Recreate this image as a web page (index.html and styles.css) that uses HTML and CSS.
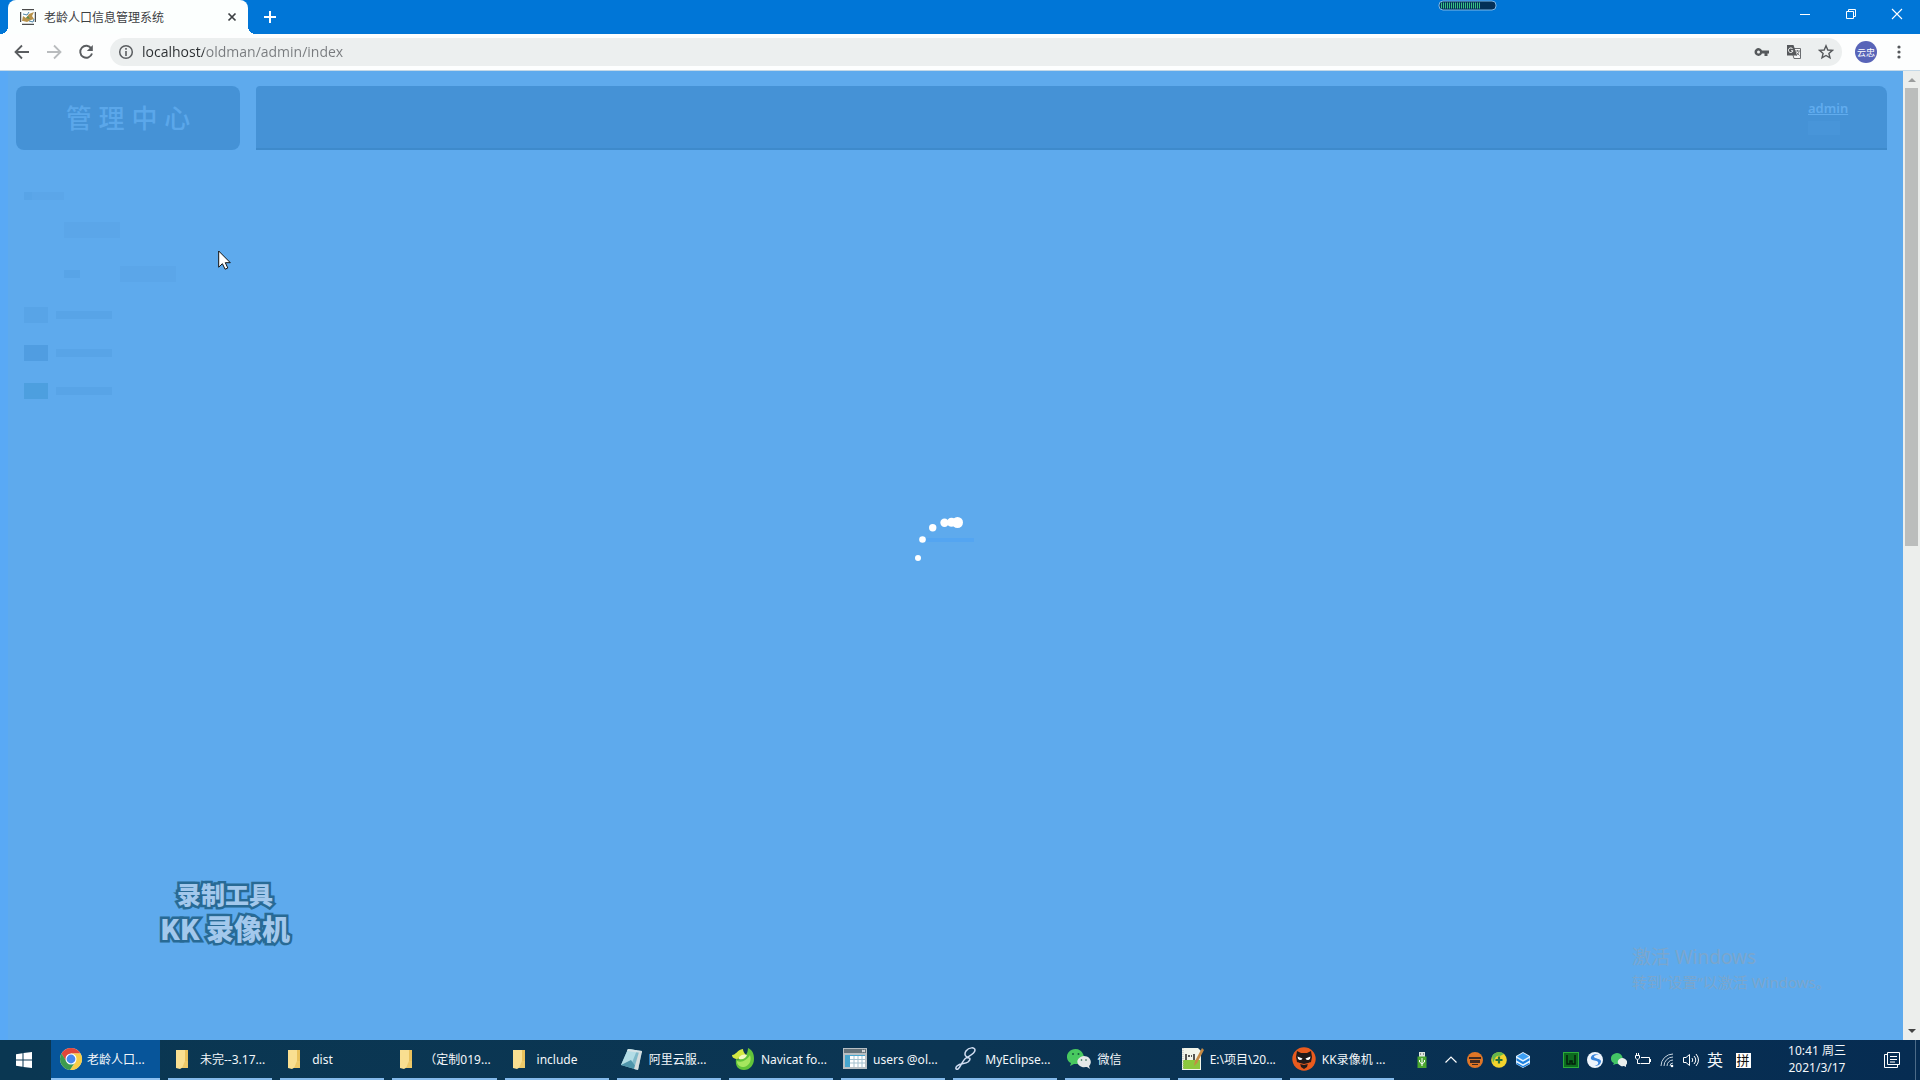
FILE: index.html
```html
<!DOCTYPE html>
<html lang="zh-CN">
<head>
<meta charset="utf-8">
<title>老龄人口信息管理系统</title>
<link rel="stylesheet" href="styles.css">
</head>
<body>
<div class="screen">
  <header class="tabstrip">
    <div class="tab">
      <svg class="favicon" viewBox="0 0 16 16" width="16" height="16"><path d="M2 .7h12M2 15.3h12M.7 3v10M15.3 3v10" stroke="#222" fill="none"/><path d="M2 12l1-5 3 2 3-4 5-2-2 4 2 3-3 1-4 2-4-1z" fill="#b8924a"/><path d="M3 5l4 1 2-3M9 12l4 1 1-3" stroke="#4f86a8" fill="none"/><path d="M6 9l4 1-2-3z" fill="#5e8b4a"/></svg>
      <span class="tab-title">老龄人口信息管理系统</span>
      <button class="plain tab-close" aria-label="关闭标签页"><svg viewBox="0 0 16 16" width="16" height="16"><path d="M4.500 4.500l7 7M11.500 4.500l-7 7" stroke="#3c4043" stroke-width="1.700"/></svg></button>
    </div>
    <button class="plain new-tab" aria-label="新标签页"><svg viewBox="0 0 16 16" width="16" height="16"><path d="M8 2v12M2 8h12" stroke="#fff" stroke-width="2"/></svg></button>
    <div class="window-buttons">
      <button class="plain" aria-label="最小化"><svg viewBox="0 0 12 12" width="12" height="12"><path d="M1 6.500h10" stroke="#fff"/></svg></button>
      <button class="plain" aria-label="还原"><svg viewBox="0 0 12 12" width="12" height="12"><path d="M1.500 3.500h7v7h-7zM3.500 3.500v-2h7v7h-2" fill="none" stroke="#fff"/></svg></button>
      <button class="plain" aria-label="关闭"><svg viewBox="0 0 12 12" width="12" height="12"><path d="M1 1l10 10M11 1L1 11" stroke="#fff" stroke-width="1.100"/></svg></button>
    </div>
    <svg class="meter" viewBox="0 0 60 12" width="60" height="12"><rect x="1" y="1" width="57" height="9" rx="4" fill="#043057" stroke="#7db7e8"/><path d="M3 5.500h39" stroke="#38c383" stroke-width="6" stroke-dasharray="1 1"/></svg>
  </header>

  <nav class="toolbar">
    <div class="nav-buttons">
      <button class="plain" aria-label="后退"><svg viewBox="0 0 16 16" width="16" height="16"><path d="M15 8H2M8 1.500L1.500 8 8 14.500" fill="none" stroke="#5a5d60" stroke-width="1.800"/></svg></button>
      <button class="plain" aria-label="前进"><svg viewBox="0 0 16 16" width="16" height="16"><path d="M1 8h13M8 1.500L14.500 8 8 14.500" fill="none" stroke="#b9bcbe" stroke-width="1.800"/></svg></button>
      <button class="plain" aria-label="重新加载"><svg viewBox="0 0 16 16" width="16" height="16"><path d="M13.300 4.500A6 6 0 1 0 14 9.500" fill="none" stroke="#5a5d60" stroke-width="1.900"/><path d="M14.800 1v6h-6z" fill="#5a5d60"/></svg></button>
    </div>
    <div class="omnibox">
      <svg viewBox="0 0 16 16" width="16" height="16"><circle cx="8" cy="8" r="6.300" fill="none" stroke="#5a5d60" stroke-width="1.500"/><path d="M8 7v5M8 4v1.700" stroke="#5a5d60" stroke-width="1.600"/></svg>
      <input class="url" type="text" aria-label="地址" value="localhost/oldman/admin/index">
      <button class="plain" aria-label="密码"><svg viewBox="0 0 16 16" width="16" height="16"><path d="M8 6.500h7v3h-1.500V12h-3V9.500H8A3.900 3.900 0 1 1 8 6.500z" fill="#55585b"/><circle cx="4.500" cy="8" r="1.500" fill="#ecefef"/></svg></button>
      <button class="plain" aria-label="翻译"><svg viewBox="0 0 16 16" width="16" height="16"><path d="M5 4.500h9.500v10H8z" fill="#f5f6f6" stroke="#6a6d70"/><path d="M1 1h6.500l3.500 10.500H1z" fill="#55585b"/><path d="M6.700 5A2.300 2.300 0 1 0 7 6.800H5" fill="none" stroke="#fff"/><path d="M9 7h5M11.500 6v1.500M13 7.500c-.5 2-1.500 3-3 4M10.500 8.500l3 3" fill="none" stroke="#6a6d70" stroke-width=".9"/></svg></button>
      <button class="plain" aria-label="收藏"><svg viewBox="0 0 16 16" width="16" height="16"><path d="M8 1.800l1.800 4.200 4.600.4-3.500 3 1.100 4.500L8 11.500l-4 2.400 1.100-4.500-3.500-3 4.600-.4z" fill="none" stroke="#55585b" stroke-width="1.400"/></svg></button>
    </div>
    <button class="plain avatar">云忠</button>
    <button class="plain menu" aria-label="菜单"><svg viewBox="0 0 16 16" width="16" height="16"><g fill="#55585b"><circle cx="8" cy="3" r="1.600"/><circle cx="8" cy="8" r="1.600"/><circle cx="8" cy="13" r="1.600"/></g></svg></button>
  </nav>

  <div class="viewport">
    <main class="page">
      <aside class="sidebar">
        <h1 class="brand">管 理 中 心</h1>
        <div class="side-menu">
          <div class="row"><i class="mark"></i><i class="mark medium faint"></i></div>
          <div class="row sub"><i class="mark wide tall faint"></i></div>
          <div class="row sub"><i class="mark small"></i><i class="mark wide tall faint far"></i></div>
          <div class="row item"><i class="mark icon"></i><i class="mark wide"></i></div>
          <div class="row item"><i class="mark icon dark"></i><i class="mark wide"></i></div>
          <div class="row item"><i class="mark icon teal"></i><i class="mark wide"></i></div>
        </div>
      </aside>
      <div class="topbar">
        <div class="user"><a href="#">admin</a><i class="user-note"></i></div>
      </div>
      <div class="loader" role="status" aria-label="加载中">
        <svg viewBox="0 0 80 80" width="80" height="80"><path d="M14 24h48" stroke="#54a5f1" stroke-width="4"/><g fill="#fff"><circle cx="6" cy="42" r="3"/><circle cx="10.500" cy="23.500" r="3.300"/><circle cx="20.700" cy="11.700" r="3.700"/><circle cx="32.500" cy="6.700" r="4.200"/><circle cx="39.500" cy="6.200" r="4.500"/><circle cx="45.500" cy="6.500" r="5.500"/></g></svg>
      </div>
      <div class="recorder"><span>录制工具</span><span class="recorder-name">KK 录像机</span></div>
      <div class="activate"><span class="activate-title">激活 Windows</span><span>转到“设置”以激活 Windows。</span></div>
      <svg class="cursor" viewBox="0 0 13 20" width="13" height="20"><path d="M.7 1v16.200l3.700-3.500 2.700 5.500 2.700-1.200-2.500-5.300h5z" fill="#fff" stroke="#111"/></svg>
    </main>
    <div class="scrollbar">
      <svg viewBox="0 0 17 17" width="17" height="17"><path d="M5 11l4-4 4 4z" fill="#9b9d9d"/></svg>
      <div class="track"><div class="thumb"></div></div>
      <svg viewBox="0 0 17 17" width="17" height="17"><path d="M5 6l4 4 4-4z" fill="#444"/></svg>
    </div>
  </div>

  <footer class="taskbar">
    <button class="plain start" aria-label="开始"><svg viewBox="0 0 16 16" width="16" height="16"><path d="M0 2.300l6.500-1v6.200H0zM7.500 1.100L16 0v7.500H7.500zM0 8.500h6.500v6.300L0 13.800zM7.500 8.500H16V16l-8.500-1.100z" fill="#fff"/></svg></button>
    <div class="tasks">
      <button class="plain task active"><svg viewBox="0 0 24 24" width="24" height="24"><circle cx="12" cy="12" r="11" fill="#e8e8e8"/><path d="M2.500 6.500A11 11 0 0 1 21.500 6.500H12L7.200 14.700z" fill="#e0463a"/><path d="M21.500 6.500A11 11 0 0 1 11 23L16.800 14.700 16.500 9 12 6.500z" fill="#f7cd46"/><path d="M2.500 6.500A11 11 0 0 0 11 23L16.500 14.500H7.500z" fill="#3d9b4f"/><circle cx="12" cy="12" r="5.500" fill="#fff"/><circle cx="12" cy="12" r="4.400" fill="#4787ed"/></svg><span>老龄人口...</span></button>
      <button class="plain task"><svg viewBox="0 0 24 24" width="24" height="24"><path d="M6 3h12v18H6z" fill="#e9c15c"/><path d="M6 3h9v16l-5 3-4-1z" fill="#f9df91"/><path d="M15 14h3v7h-6z" fill="#edc969"/></svg><span>未完--3.17...</span></button>
      <button class="plain task"><svg viewBox="0 0 24 24" width="24" height="24"><path d="M6 3h12v18H6z" fill="#e9c15c"/><path d="M6 3h9v16l-5 3-4-1z" fill="#f9df91"/><path d="M15 14h3v7h-6z" fill="#edc969"/></svg><span>dist</span></button>
      <button class="plain task"><svg viewBox="0 0 24 24" width="24" height="24"><path d="M6 3h12v18H6z" fill="#e9c15c"/><path d="M6 3h9v16l-5 3-4-1z" fill="#f9df91"/><path d="M15 14h3v7h-6z" fill="#edc969"/></svg><span>（定制019...</span></button>
      <button class="plain task"><svg viewBox="0 0 24 24" width="24" height="24"><path d="M6 3h12v18H6z" fill="#e9c15c"/><path d="M6 3h9v16l-5 3-4-1z" fill="#f9df91"/><path d="M15 14h3v7h-6z" fill="#edc969"/></svg><span>include</span></button>
      <button class="plain task"><svg viewBox="0 0 24 24" width="24" height="24"><path d="M9 2l14 2-4 19L2 18z" fill="#7fb9c9"/><path d="M9 2l9 1.300L12 18 2 18z" fill="#b3dde6"/><path d="M2 18l10-5 7 10z" fill="#4f95ab"/><path d="M9 2l14 2-.5 2L8 4z" fill="#d6e3e6"/><path d="M20 5l3-1-4 19-4-1z" fill="#d5dcdd"/></svg><span>阿里云服...</span></button>
      <button class="plain task"><svg viewBox="0 0 24 24" width="24" height="24"><path d="M5 12c4 1 8-1 10-4 1-2 2-4 2-7 4 2 6 5 6 11s-4 11-10 11S4 19 5 12z" fill="#62c43a"/><path d="M1 8c4 0 5-5 11-6 0 2 1 4 3 6-3 3-6 4-10 4-3-1-4-2-4-4z" fill="#d3e943"/><path d="M6 14c5 2 10-1 13-6 2 6-1 11-6 12-4 0-7-2-7-6z" fill="#a6e65f"/><path d="M8 10c3-3 6-3 8-2-1 3-4 5-8 4z" fill="#f1f9c0"/></svg><span>Navicat fo...</span></button>
      <button class="plain task"><svg viewBox="0 0 24 24" width="24" height="24"><path d="M0 1h24v21H0z" fill="#b8bfc3"/><path d="M1 2h22v4H1z" fill="#65737b"/><path d="M2 8h20v12H2z" fill="#46a6cf"/><path d="M7 9h15v11H7z" fill="#fff"/><path d="M7 12.500h15M7 16h15M11 9v11M15 9v11M19 9v11" stroke="#a4c1cf"/><path d="M19 3l3 2M22 3l-3 2" stroke="#eee"/></svg><span>users @ol...</span></button>
      <button class="plain task"><svg viewBox="0 0 24 24" width="24" height="24"><path d="M14 11c-4-1-5-4-3-7 3-4 9-4 9-1 0 4-6 6-9 8-4 3-6 10-8 11-2 1-3-1-1-3 3-3 8-2 11-4 3-3 2-4 1-4z" fill="none" stroke="#d2def2" stroke-width="1.500"/></svg><span>MyEclipse...</span></button>
      <button class="plain task"><svg viewBox="0 0 24 24" width="24" height="24"><path d="M8.500 2C-2 3-2 14 4 16l-1 3 4-2c8 1 12-5 9-10C15 4 12 2 8.500 2z" fill="#48c95f"/><path d="M17 9c-8 1-9 9-2 11 2 .5 4 0 5 0l3 2-1-3c4-4 1-10-5-10z" fill="#e5e8e7"/><g fill="#175c3d"><circle cx="6" cy="7" r="1"/><circle cx="11.500" cy="7" r="1"/><circle cx="14.500" cy="13" r=".8"/><circle cx="19" cy="13" r=".8"/></g></svg><span>微信</span></button>
      <button class="plain task"><svg viewBox="0 0 24 24" width="24" height="24"><path d="M2 1h16l3 3v19H2z" fill="#f0f4e9"/><path d="M3 13h17v9H3z" fill="#8bc83e"/><path d="M6 7v6M8 9h2M11 9h1M14 7v6" stroke="#222" stroke-width="1.500"/><path d="M22 1l2 2-7 13-3 3 1-5z" fill="#c48a45"/><path d="M3 1v22" stroke="#bbb" stroke-dasharray="1 1"/></svg><span>E:\项目\20...</span></button>
      <button class="plain task"><svg viewBox="0 0 24 24" width="24" height="24"><circle cx="12" cy="12" r="11.700" fill="#e95b1e"/><path d="M5 4l4 2h6l4-2 1 6-1 5q-7 4-14 0l-1-5z" fill="#211a1a"/><path d="M8 16h8l-1 4-3 2-3-2z" fill="#211a1a"/><path d="M5.500 9.500l5 2q-1 2-3 1.500-2-1-2-3.500zM18.500 9.500l-5 2q1 2 3 1.500 2-1 2-3.500z" fill="#fff"/><path d="M6 16q6 3 12 0" fill="none" stroke="#e95b1e"/></svg><span>KK录像机 ...</span></button>
    </div>
    <div class="tray">
      <button class="plain usb" aria-label="安全删除硬件"><svg viewBox="0 0 16 16" width="16" height="16"><path d="M5 0h6v5H5z" fill="#dfe5df"/><path d="M6.500 1.500v1M9.500 1.500v1" stroke="#444"/><path d="M3.500 4.500h9V16h-9z" fill="#4aa62f"/><path d="M8 6v8M5.500 8v2l2.500 2 2.500-2V8" fill="none" stroke="#fff"/></svg></button>
      <button class="plain" aria-label="显示隐藏的图标"><svg viewBox="0 0 16 16" width="16" height="16"><path d="M2.500 10.500L8 5l5.500 5.500" fill="none" stroke="#fff" stroke-width="1.200"/></svg></button>
      <button class="plain" aria-label="KK录像机"><svg viewBox="0 0 16 16" width="16" height="16"><circle cx="8" cy="8" r="8" fill="#df7627"/><path d="M2 5h12v2H2zM3 8h10v3H3zM5 12h6v1H5z" fill="#3e2a22"/></svg></button>
      <button class="plain" aria-label="安全卫士"><svg viewBox="0 0 16 16" width="16" height="16"><circle cx="8" cy="8" r="7.800" fill="#f3d42d"/><path d="M1 4a8 8 0 0 1 12-2L9 4C4 3 4 8 2 11z" fill="#66b84c"/><path d="M8 4.500v7M4.500 8h7" stroke="#27723a" stroke-width="2.200"/></svg></button>
      <button class="plain" aria-label="云盘"><svg viewBox="0 0 16 16" width="16" height="16"><path d="M8 0l7 4v8l-7 4-7-4V4z" fill="#e5f3ff"/><path d="M8 1l6 3.500L8 8 2 4.500z" fill="#3da0f5"/><path d="M1.500 6L8 9.800 14.500 6v2.500L8 12.300 1.500 8.500z" fill="#1b80df"/><path d="M1.500 10.500L8 14l6.500-3.500V12L8 15.500 1.500 12z" fill="#1b80df"/></svg></button>
      <button class="plain guard" aria-label="守护"><svg viewBox="0 0 16 16" width="16" height="16"><rect x=".5" y=".5" width="15" height="15" fill="#0d6b20" stroke="#2bad39"/><path d="M4 3v9h3V9h2v3h3V3" fill="none" stroke="#031e0b" stroke-width="1.500"/></svg></button>
      <button class="plain" aria-label="浏览器"><svg viewBox="0 0 16 16" width="16" height="16"><circle cx="8" cy="8" r="8" fill="#edf4fc"/><path d="M12 3C7 1 3 4 4 7c1 2 6 1 7 3s-1 4-4 3c4 2 7-1 7-4-1-3-6-2-7-4 0-2 3-2 5-2z" fill="#3985dc"/></svg></button>
      <button class="plain" aria-label="微信"><svg viewBox="0 0 16 16" width="16" height="16"><path d="M6 1C-2 2-1 10 3 11l-1 2 3-1c6 0 8-4 6-8C10 2 8 1 6 1z" fill="#43c665"/><path d="M11 6c-5 1-6 6-1 8 1 .4 3 0 3 0l2 1v-2c3-3 0-7-4-7z" fill="#e9eeec"/></svg></button>
      <button class="plain" aria-label="电池"><svg viewBox="0 0 16 16" width="16" height="16"><path d="M6 5.500h8.500v6h-9M15.500 7v3M.5 3.500h4v2.500l-2 2-2-2zM1.500 3.500V1M3.500 3.500V1M2.500 8v3.500H5" fill="none" stroke="#fff"/></svg></button>
      <button class="plain" aria-label="网络"><svg viewBox="0 0 16 16" width="16" height="16"><path d="M2 14A12 12 0 0 1 14 2M5 14a9 9 0 0 1 9-9M8 14a6 6 0 0 1 6-6M11 14a3 3 0 0 1 3-3" fill="none" stroke="#c7d4df"/><circle cx="13" cy="14" r="1.300" fill="#fff"/></svg></button>
      <button class="plain" aria-label="音量"><svg viewBox="0 0 16 16" width="16" height="16"><path d="M.5 5.500H3l3.500-3v11l-3.500-3H.5zM9 6q1.500 2 0 4M11 4q3.500 4 0 8M13 2q5 6 0 12" fill="none" stroke="#fff"/></svg></button>
      <button class="plain lang">英</button>
      <button class="plain ime"><span>拼</span></button>
      <button class="plain clock"><span>10:41 周三</span><span>2021/3/17</span></button>
      <button class="plain notices" aria-label="通知"><svg viewBox="0 0 16 16" width="16" height="16"><path d="M3.500 .5h12v12h-12zM3.500 2.500h-3v13h13v-3M6 4.500h7M6 7.500h7M6 10h5" fill="none" stroke="#fff"/></svg></button>
    </div>
  </footer>
</div>
</body>
</html>
```
FILE: styles.css
```css
* { box-sizing: border-box; }

body {
  margin: 0;
  font-family: "Noto Sans", "Noto Sans CJK SC", sans-serif;
  font-size: 12px;
}

svg { display: block; flex: none; }

.plain {
  display: flex;
  align-items: center;
  justify-content: center;
  margin: 0;
  padding: 0;
  border: 0;
  background: none;
  color: inherit;
  font: inherit;
}

.screen {
  display: flex;
  flex-direction: column;
  height: 100vh;
  overflow: hidden;
}

/* Browser chrome */
.tabstrip {
  position: relative;
  display: flex;
  flex: none;
  height: 34px;
  padding-left: 8px;
  background: #0076d7;
}

.tab {
  position: relative;
  display: flex;
  align-items: center;
  width: 240px;
  padding: 0 8px 0 12px;
  gap: 8px;
  border-radius: 8px 8px 0 0;
  background: #fcfffe;
  color: #3c4043;
}

.tab::before,
.tab::after {
  content: "";
  position: absolute;
  bottom: 0;
  width: 8px;
  height: 8px;
}

.tab::before {
  right: 100%;
  background: radial-gradient(circle at 0 0, transparent 8px, #fcfffe 8px);
}

.tab::after {
  left: 100%;
  background: radial-gradient(circle at 100% 0, transparent 8px, #fcfffe 8px);
}

.tab-title { flex: 1; white-space: nowrap; }

.new-tab { width: 44px; }

.window-buttons {
  display: flex;
  margin-left: auto;
  padding-bottom: 6px;
}

.window-buttons .plain { width: 46px; }

.meter { position: absolute; top: 0; right: 422px; }

.toolbar {
  display: flex;
  flex: none;
  align-items: center;
  height: 37px;
  padding-left: 14px;
  background: #fdfefe;
  border-bottom: 1px solid #c4d9e8;
}

.nav-buttons { display: flex; gap: 16px; width: 96px; }

.omnibox {
  display: flex;
  flex: 1;
  align-items: center;
  height: 28px;
  padding-left: 8px;
  border-radius: 14px;
  background: #ecefef;
}

.omnibox .plain { width: 32px; }

.url {
  flex: 1;
  min-width: 0;
  margin-left: 8px;
  padding: 0;
  border: 0;
  outline: 0;
  background: linear-gradient(90deg, #2b2e31 62px, #777a7d 62px);
  -webkit-background-clip: text;
  background-clip: text;
  color: transparent;
  font: 14px/20px "Open Sans", "Noto Sans", sans-serif;
}

.avatar {
  width: 22px;
  height: 22px;
  margin-left: 13px;
  border-radius: 50%;
  background: #5864b8;
  color: #fff;
  font-size: 9px;
  white-space: nowrap;
}

.menu { width: 43px; }

/* Web page */
.viewport {
  display: flex;
  flex: 1;
  min-height: 0;
}

.page {
  position: relative;
  display: flex;
  flex: 1;
  align-items: flex-start;
  gap: 16px;
  padding: 15px 16px;
  background: linear-gradient(90deg, #59a9f5 8px, #5eaaed 8px);
}

.sidebar { width: 224px; }

.brand {
  margin: 0;
  border-radius: 8px;
  background: #4592d6;
  color: #5ba7ea;
  font-size: 26px;
  font-weight: 500;
  line-height: 64px;
  text-align: center;
}

.side-menu { padding: 34px 0 0 8px; }

.row {
  display: flex;
  align-items: center;
  height: 38px;
}

.row:first-child { height: 24px; }
.row.sub { height: 44px; padding-left: 40px; }
.row.item { gap: 8px; }

.mark { width: 8px; height: 8px; background: #58a4e7; }
.mark.faint { background: #5ba6e9; }
.mark.small { width: 16px; }
.mark.medium { width: 32px; }
.mark.wide { width: 56px; }
.mark.tall { height: 16px; }
.mark.far { margin-left: 40px; }
.mark.icon { width: 24px; height: 16px; }
.mark.dark { background: #509de1; }
.mark.teal { background: #4d9fdf; }

.topbar {
  display: flex;
  flex: 1;
  justify-content: flex-end;
  height: 64px;
  padding: 14px 32px 0 0;
  border-bottom: 2px solid #3e8acb;
  border-radius: 4px 8px 0 0;
  background: #4592d6;
}

.user { width: 47px; }
.user a { color: #61acee; font-size: 13px; font-weight: 600; line-height: 16px; }
.user-note { display: block; width: 32px; height: 14px; margin-top: 4px; background: #4895d9; }

.loader {
  position: absolute;
  inset: 0;
  display: flex;
  align-items: center;
  justify-content: center;
}

.recorder {
  position: absolute;
  bottom: 95px;
  left: 160px;
  display: flex;
  flex-direction: column;
  align-items: center;
  gap: 2px;
  color: #a3c8ec;
  font-family: "Noto Sans CJK SC", sans-serif;
  font-size: 24px;
  font-weight: 900;
  line-height: 30px;
  white-space: nowrap;
  -webkit-text-stroke: 5px #286a95;
  paint-order: stroke fill;
}

.recorder-name { font-size: 28px; line-height: 34px; }

.activate {
  position: absolute;
  right: 76px;
  bottom: 46px;
  display: flex;
  flex-direction: column;
  width: 195px;
  color: #7ba6cc;
  font-size: 15px;
  line-height: 24px;
  white-space: nowrap;
}

.activate-title { font-size: 19px; line-height: 26px; }

.cursor { position: absolute; top: 179px; left: 218px; }

.scrollbar {
  display: flex;
  flex: none;
  flex-direction: column;
  width: 17px;
  background: #eceeec;
}

.track { flex: 1; padding: 0 2px; }
.thumb { height: 49%; background: #bbbdbc; }

/* Taskbar */
.taskbar {
  display: flex;
  flex: none;
  height: 40px;
  background: linear-gradient(90deg, #0a3752, #0b3553 50%, #062c52);
  color: #f3f7fa;
}

.start { width: 48px; }

.tasks {
  display: grid;
  flex: 1;
  grid-template-columns: 109px repeat(11, 1fr);
  gap: 8px;
  min-width: 0;
  padding-left: 3px;
}

.task {
  justify-content: flex-start;
  min-width: 0;
  gap: 6px;
  padding-left: 2px;
  overflow: hidden;
  border-bottom: 2px solid #84baeb;
  white-space: nowrap;
}

.task.active {
  gap: 4px;
  padding-left: 8px;
  background: #07559a;
  border-color: #8cc1f3;
}

.tray {
  display: flex;
  flex: none;
  padding-left: 16px;
}

.tray .plain { width: 24px; }
.tray .usb { margin-right: 5px; }
.tray .guard { margin-left: 24px; }
.tray .lang { padding-bottom: 2px; font-size: 16px; }
.tray .ime { margin-left: 4px; }

.ime span {
  width: 15px;
  background: #fff;
  color: #111;
  font-size: 13px;
  line-height: 15px;
  text-align: center;
}

.tray .clock {
  flex-direction: column;
  width: 94px;
  margin-left: 15px;
  padding-bottom: 2px;
  line-height: 17px;
}

.tray .notices {
  width: 52px;
  padding-left: 4px;
  border-right: 1px solid #4c6b88;
  margin-right: 4px;
}
```
